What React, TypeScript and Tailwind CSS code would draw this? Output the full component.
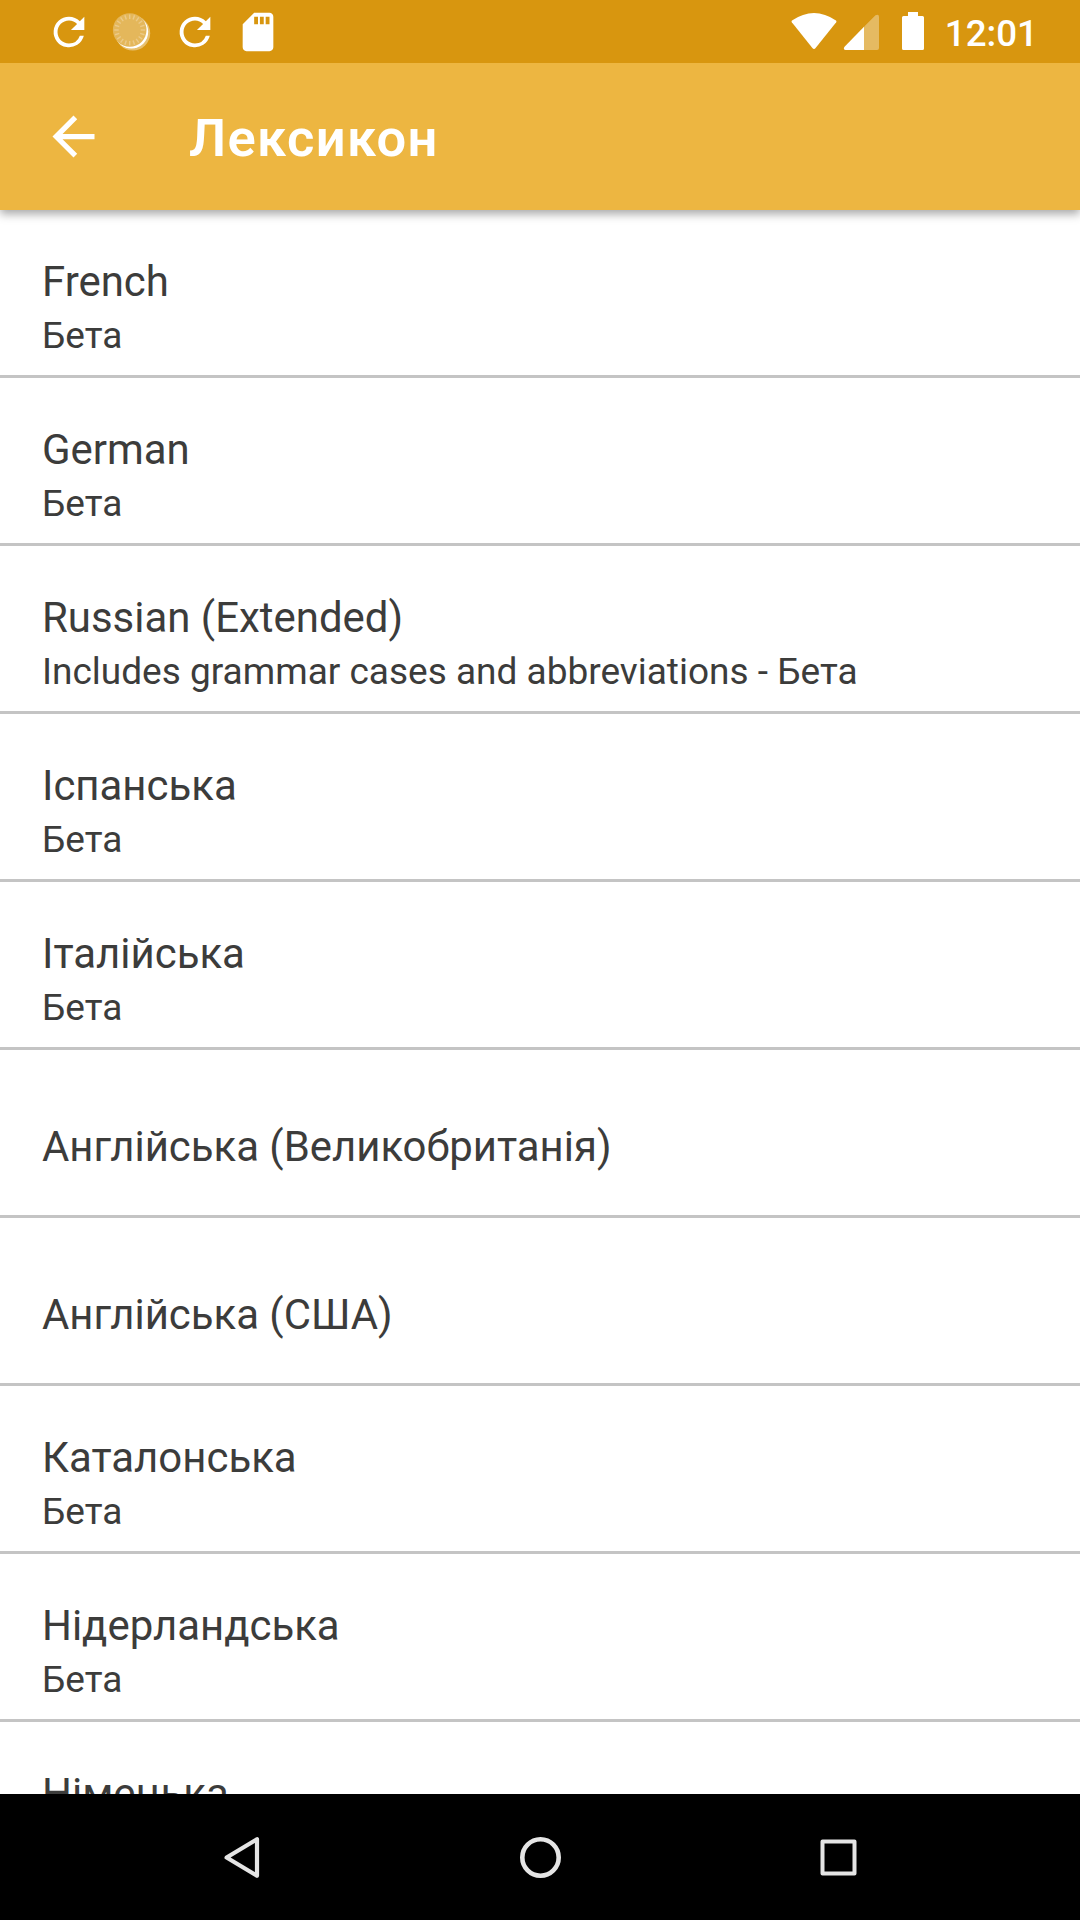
import React from 'react';

type Lexicon = { name: string; note?: string };

const lexicons: Lexicon[] = [
  { name: 'French', note: 'Бета' },
  { name: 'German', note: 'Бета' },
  { name: 'Russian (Extended)', note: 'Includes grammar cases and abbreviations - Бета' },
  { name: 'Іспанська', note: 'Бета' },
  { name: 'Італійська', note: 'Бета' },
  { name: 'Англійська (Великобританія)' },
  { name: 'Англійська (США)' },
  { name: 'Каталонська', note: 'Бета' },
  { name: 'Нідерландська', note: 'Бета' },
  { name: 'Німецька' },
];

function RefreshIcon() {
  return (
    <svg className="size-[46px]" viewBox="0 0 24 24" fill="currentColor">
      <path d="M17.65 6.35A7.958 7.958 0 0 0 12 4a8 8 0 1 0 7.73 10h-2.08A5.99 5.99 0 0 1 12 18c-3.31 0-6-2.69-6-6s2.69-6 6-6c1.66 0 3.14.69 4.22 1.78L13 11h7V4l-2.35 2.35z" />
    </svg>
  );
}

function SyncDialIcon() {
  const ticks = Array.from({ length: 20 }, (_, i) => i * 18);
  return (
    <svg className="size-[46px]" viewBox="0 0 46 46">
      <circle cx="23.8" cy="24.2" r="17.4" fill="#fff" fillOpacity="0.4" />
      <circle cx="22.4" cy="22.8" r="16.8" fill="#fff" />
      <circle cx="20.7" cy="21" r="16.8" fill="#e4b75b" />
      {ticks.map((a) => (
        <line key={a} x1="20.7" y1="5.5" x2="20.7" y2="10" stroke="#ecca88" strokeWidth="1.4" transform={`rotate(${a} 20.7 21)`} />
      ))}
    </svg>
  );
}

function SdCardIcon() {
  return (
    <svg className="size-[46px]" viewBox="0 0 24 24" fill="currentColor">
      <path d="M18 2h-8L4.02 8 4 20c0 1.1.9 2 2 2h12c1.1 0 2-.9 2-2V4c0-1.1-.9-2-2-2zm-6 6h-2V4h2v4zm3 0h-2V4h2v4zm3 0h-2V4h2v4z" />
    </svg>
  );
}

function StatusBar() {
  return (
    <header className="relative z-20 flex h-[63px] shrink-0 items-start justify-between bg-[#d8960f] pl-[45.5px] pr-[42px] text-white">
      <div className="flex gap-[17px] pt-[8.5px]">
        <RefreshIcon />
        <SyncDialIcon />
        <RefreshIcon />
        <SdCardIcon />
      </div>
      <div className="flex">
        <svg className="mt-[10px] h-[42px] w-[136px]" viewBox="790 10 136 42" fill="#fff">
          <path d="M792 20.5Q814 5.500 836 20.500Q836.800 21.300 836.200 22.200L815.600 48Q814 49.800 812.400 48L791.800 22.200Q791.200 21.300 792 20.500Z" />
          <path d="M875.500 15.300Q879 13.500 879 17V48Q879 50 877 50H864V26.800Z" fillOpacity="0.35" />
          <path d="M864 26.800V50H845.500Q843 49.500 844.300 47Z" />
          <path d="M908 12h10v4h4.500Q924 16 924 17.500V48.500Q924 50 922.500 50H903.500Q902 50 902 48.500V17.500Q902 16 903.500 16H908Z" />
        </svg>
        <span className="ml-[19px] mt-[12px] text-[36.75px] font-medium leading-[44px]">12:01</span>
      </div>
    </header>
  );
}

function Toolbar() {
  return (
    <div className="z-10 flex h-[147px] shrink-0 items-center bg-[#edb641] pl-[42px] text-white shadow-[0_4px_9px_rgba(0,0,0,0.35)]">
      <svg className="size-[63px]" viewBox="0 0 24 24" fill="currentColor">
        <path d="M20 11H7.830l5.590-5.590L12 4l-8 8 8 8 1.410-1.410L7.830 13H20v-2z" />
      </svg>
      <h1 className="ml-[84px] mt-[2px] text-[52.5px] font-semibold leading-[62px] tracking-[1.3px]">Лексикон</h1>
    </div>
  );
}

function LexiconRow({ name, note }: Lexicon) {
  return (
    <li className="flex h-[168px] shrink-0 flex-col border-b-[3px] border-[#c4c4c4] px-[42px] text-[#3c3c3b]">
      {note ? (
        <>
          <span className="mt-[47px] text-[41.95px] leading-[50px]">{name}</span>
          <span className="mt-[7px] text-[37px] leading-[44px]">{note}</span>
        </>
      ) : (
        <span className="mt-[72px] text-[41.9px] leading-[50px]">{name}</span>
      )}
    </li>
  );
}

// The last entry scrolls under the navigation bar, so only its name's top edge shows.
function PartialRow({ name }: Lexicon) {
  return (
    <li className="h-[72px] shrink-0 overflow-hidden px-[42px] pt-[47px] text-[42px] leading-[50px] text-[#3c3c3b]">
      {name}
    </li>
  );
}

function NavigationBar() {
  return (
    <nav className="flex h-[126px] shrink-0 items-center justify-center gap-[235px] bg-black">
      <svg className="size-[63px]" viewBox="0 0 63 63" fill="none" stroke="#e5e5e5" strokeWidth="4.2" strokeLinejoin="round">
        <path d="M46 13.200V49.800L15.600 31.500Z" />
      </svg>
      <svg className="size-[63px]" viewBox="0 0 63 63" fill="none" stroke="#e5e5e5" strokeWidth="4.600">
        <circle cx="31.500" cy="31.500" r="18.200" />
      </svg>
      <svg className="size-[63px]" viewBox="0 0 63 63" fill="none" stroke="#e5e5e5" strokeWidth="4" strokeLinejoin="round">
        <rect x="15.500" y="15.500" width="32" height="32" />
      </svg>
    </nav>
  );
}

export default function App() {
  return (
    <div className="flex h-[1920px] w-[1080px] flex-col overflow-hidden bg-white font-['Roboto',sans-serif]">
      <StatusBar />
      <Toolbar />
      <ul className="flex min-h-0 flex-1 flex-col overflow-hidden">
        {lexicons.slice(0, -1).map((item) => (
          <LexiconRow key={item.name} {...item} />
        ))}
        <PartialRow {...lexicons[lexicons.length - 1]} />
      </ul>
      <NavigationBar />
    </div>
  );
}
